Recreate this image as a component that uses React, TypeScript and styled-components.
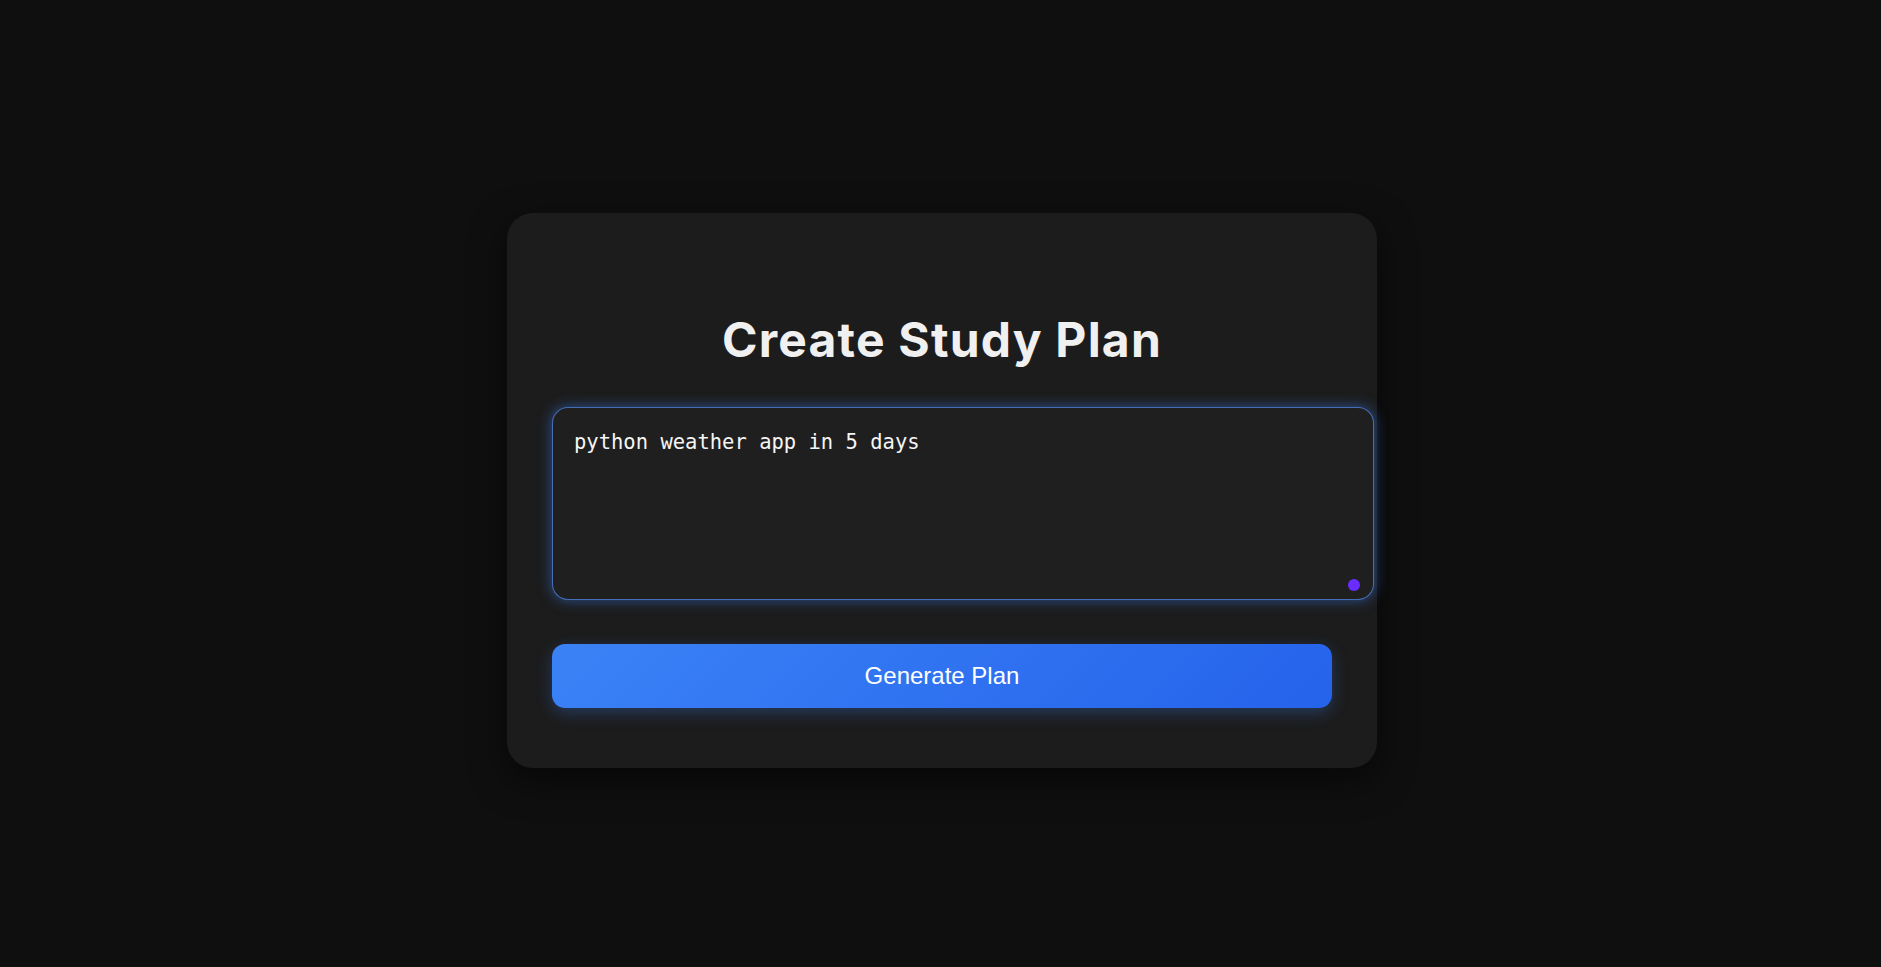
import { useState } from "react";
import styled, { createGlobalStyle } from "styled-components";

const GlobalStyle = createGlobalStyle`
  * {
    box-sizing: border-box;
  }

  body {
    margin: 0;
    background: #0f0f0f;
    font-family: "Liberation Sans", Arial, sans-serif;
  }
`;

const Page = styled.main`
  min-height: 100vh;
  display: flex;
  justify-content: center;
  align-items: flex-start;
  padding: 213px 0 0 3px;
`;

const Card = styled.section`
  width: 870px;
  background: #1c1c1c;
  border-radius: 26px;
  padding: 0 45px 60px;
  box-shadow: 0 12px 36px rgba(0, 0, 0, 0.55);
`;

const Title = styled.h1`
  margin: 0;
  padding-top: 103px;
  text-align: center;
  font-family: Inter, "Noto Sans", sans-serif;
  font-weight: 700;
  font-size: 48px;
  line-height: 48px;
  letter-spacing: 1.2px;
  color: #f0f0f0;
`;

const InputWrap = styled.div`
  position: relative;
  width: calc(100% + 42px);
  margin-top: 43px;
`;

const PromptInput = styled.textarea`
  display: block;
  width: 100%;
  height: 193px;
  padding: 20px 20px 20px 21px;
  resize: none;
  background: #1f1f1f;
  color: #f5f5f5;
  border: 1px solid rgba(80, 130, 220, 0.8);
  border-radius: 16px;
  box-shadow: 0 0 14px rgba(59, 130, 246, 0.55);
  font-family: "DejaVu Sans Mono", "Liberation Mono", monospace;
  font-size: 20.5px;
  line-height: 1.4;
  outline: none;
`;

const Dot = styled.span`
  position: absolute;
  right: 14px;
  bottom: 9px;
  width: 12px;
  height: 12px;
  border-radius: 50%;
  background: #6a2cff;
`;

const GenerateButton = styled.button`
  display: block;
  width: 100%;
  margin-top: 44px;
  padding: 18px;
  border: none;
  border-radius: 13px;
  background: linear-gradient(135deg, #3b82f6 0%, #2563eb 100%);
  box-shadow: 0 5px 16px rgba(59, 130, 246, 0.3);
  color: #ffffff;
  font-family: "Liberation Sans", Arial, sans-serif;
  font-size: 24px;
  line-height: 28px;
  cursor: pointer;
`;

const App = () => {
  const [prompt, setPrompt] = useState("python weather app in 5 days");

  return (
    <>
      <GlobalStyle />
      <Page>
        <Card>
          <Title>Create Study Plan</Title>
          <InputWrap>
            <PromptInput value={prompt} onChange={e => setPrompt(e.target.value)} />
            <Dot />
          </InputWrap>
          <GenerateButton>Generate Plan</GenerateButton>
        </Card>
      </Page>
    </>
  );
};

export default App;
